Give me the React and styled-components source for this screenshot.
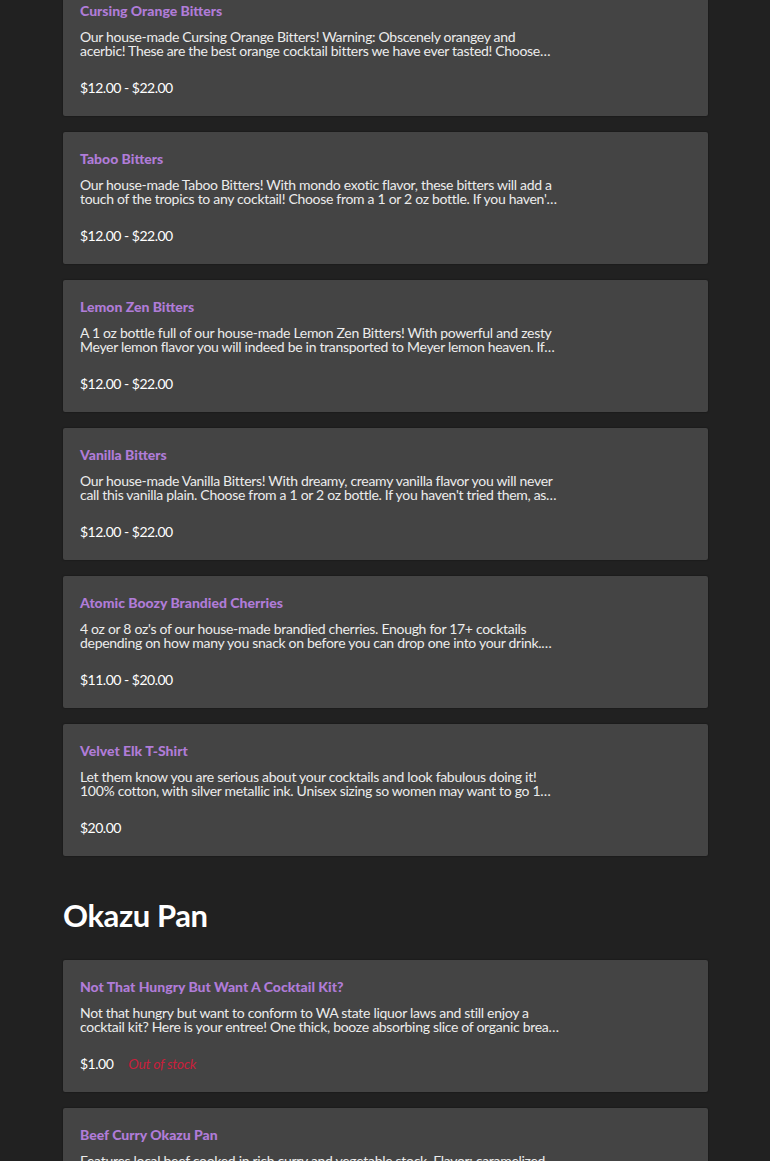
import React from 'react'
import styled, { createGlobalStyle } from 'styled-components'

const GlobalStyle = createGlobalStyle`
  html, body {
    margin: 0;
    background: #212121;
    font-family: Lato, "Noto Sans", sans-serif;
    color: #fff;
    overflow: hidden;
  }
`

const Page = styled.main`
  padding: 0 62px 0 63px;
  margin-top: -16px;
`

const Section = styled.section`
  display: flex;
  flex-direction: column;
  gap: 16px;
`

const SectionTitle = styled.h2`
  margin: 41px 0 27px;
  font-size: 31px;
  line-height: 36px;
  font-weight: 700;
  color: #fff;
  letter-spacing: -0.4px;
`

const Card = styled.article`
  background: #444444;
  border-radius: 2px;
  box-shadow: 0 0 2px rgba(0, 0, 0, 0.55);
  padding: 18px 17px 19px;
  height: 132px;
  box-sizing: border-box;
`

const ItemName = styled.h3`
  margin: 0 0 10px;
  font-size: 14px;
  line-height: 18px;
  font-weight: 900;
  color: #b07cd8;
`

const Desc = styled.p`
  margin: 0 0 21px;
  max-width: 480px;
  font-size: 14px;
  line-height: 14px;
  letter-spacing: -0.3px;
  color: #ececec;
  display: -webkit-box;
  -webkit-line-clamp: 2;
  -webkit-box-orient: vertical;
  overflow: hidden;
`

const PriceRow = styled.div`
  display: flex;
  gap: 15px;
  font-size: 14px;
  line-height: 18px;
  color: #fff;
`

const Price = styled.span`
  letter-spacing: -0.5px;
`

const Stock = styled.span`
  color: #c8203c;
  font-style: italic;
  letter-spacing: -0.3px;
`

const bitters = [
  {
    name: 'Cursing Orange Bitters',
    desc: 'Our house-made Cursing Orange Bitters! Warning: Obscenely orangey and acerbic! These are the best orange cocktail bitters we have ever tasted! Choose from a 1 or 2 oz bottle.',
    price: '$12.00 - $22.00',
  },
  {
    name: 'Taboo Bitters',
    desc: "Our house-made Taboo Bitters! With mondo exotic flavor, these bitters will add a touch of the tropics to any cocktail! Choose from a 1 or 2 oz bottle. If you haven't tried them, ask us.",
    price: '$12.00 - $22.00',
  },
  {
    name: 'Lemon Zen Bitters',
    desc: 'A 1 oz bottle full of our house-made Lemon Zen Bitters! With powerful and zesty Meyer lemon flavor you will indeed be in transported to Meyer lemon heaven. If you love lemon, try them.',
    price: '$12.00 - $22.00',
  },
  {
    name: 'Vanilla Bitters',
    desc: "Our house-made Vanilla Bitters! With dreamy, creamy vanilla flavor you will never call this vanilla plain. Choose from a 1 or 2 oz bottle. If you haven't tried them, ask us for a taste.",
    price: '$12.00 - $22.00',
  },
  {
    name: 'Atomic Boozy Brandied Cherries',
    desc: "4 oz or 8 oz's of our house-made brandied cherries. Enough for 17+ cocktails depending on how many you snack on before you can drop one into your drink. Perfect for Manhattans.",
    price: '$11.00 - $20.00',
  },
  {
    name: 'Velvet Elk T-Shirt',
    desc: 'Let them know you are serious about your cocktails and look fabulous doing it! 100% cotton, with silver metallic ink. Unisex sizing so women may want to go 1 size down.',
    price: '$20.00',
  },
]

const okazu = [
  {
    name: 'Not That Hungry But Want A Cocktail Kit?',
    desc: 'Not that hungry but want to conform to WA state liquor laws and still enjoy a cocktail kit? Here is your entree! One thick, booze absorbing slice of organic bread with butter.',
    price: '$1.00',
    out: true,
  },
  {
    name: 'Beef Curry Okazu Pan',
    desc: 'Features local beef cooked in rich curry and vegetable stock. Flavor: caramelized onion, warm spices and a gentle heat wrapped in soft milk bread.',
    price: '$6.00',
  },
]

const Item = ({ name, desc, price, out }) => (
  <Card>
    <ItemName>{name}</ItemName>
    <Desc>{desc}</Desc>
    <PriceRow>
      <Price>{price}</Price>
      {out && <Stock>Out of stock</Stock>}
    </PriceRow>
  </Card>
)

const App = () => (
  <>
    <GlobalStyle />
    <Page>
      <Section>
        {bitters.map(item => <Item key={item.name} {...item} />)}
      </Section>
      <SectionTitle>Okazu Pan</SectionTitle>
      <Section>
        {okazu.map(item => <Item key={item.name} {...item} />)}
      </Section>
    </Page>
  </>
)

export default App
